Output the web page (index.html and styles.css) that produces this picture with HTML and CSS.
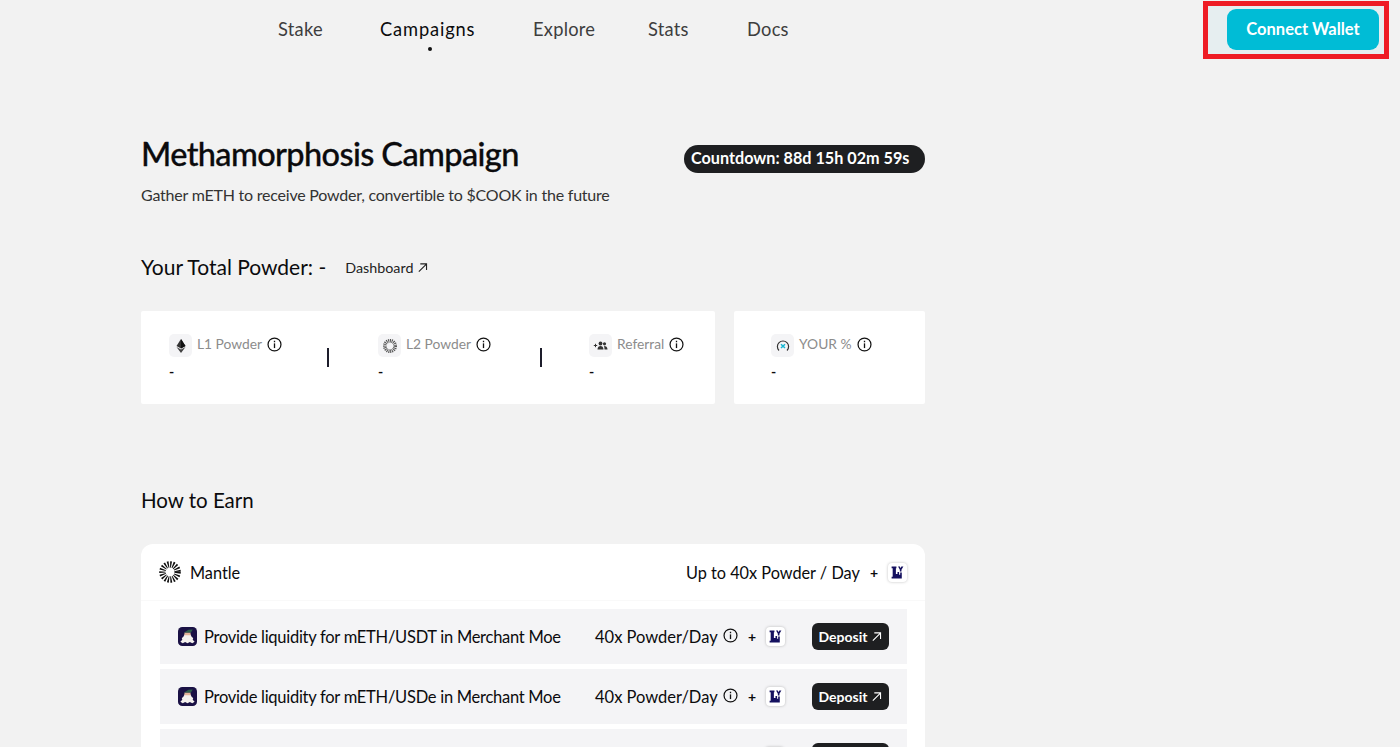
FILE: index.html
```html
<!DOCTYPE html>
<html lang="en">
<head>
<meta charset="utf-8">
<title>Methamorphosis Campaign</title>
<link rel="stylesheet" href="styles.css">
</head>
<body>
<svg class="sprites" width="0" height="0" aria-hidden="true">
  <symbol id="info" viewBox="0 0 16 16"><circle cx="8" cy="8" r="6.9" fill="none" stroke="currentColor" stroke-width="1.3"/><rect x="7.3" y="6.8" width="1.4" height="5" fill="currentColor"/><rect x="7.3" y="4" width="1.4" height="1.6" fill="currentColor"/></symbol>
  <symbol id="arrow" viewBox="0 0 12 12"><path d="M2 10.5 10 2.5M3.6 2H10.4V8.8" fill="none" stroke="currentColor" stroke-width="1.2"/></symbol>
  <symbol id="ly" viewBox="0 0 14 14"><path d="M1.5 1.5H6V3H5.5V8.5H7V6.5H8.5V9H9.5V7H11V12.5H1.5V11H2.5V3H1.5Z" fill="#14105f"/><path d="M7.5 1.5H9.2L9.9 3 10.6 1.5H12.5L10.7 4.4V6H9.2V4.4Z" fill="#14105f"/></symbol>
  <symbol id="moe" viewBox="0 0 20 20"><rect width="20" height="20" rx="4.5" fill="#1a1145"/><path d="M7 7.5 5.5 10.5 4 11.5 4.5 13.5 2.5 15.5 5 17 7.5 15.8 10 17 12.5 15.8 15 17 17.5 15.5 15.5 13.5 16 11.5 14.5 10.5 13 7.5Z" fill="#f4f1ee"/><path d="M6 6 11 3 15.5 2.5 13.5 6Z" fill="#2f5f4d"/><path d="M6.8 6H13.2V8.8H6.8Z" fill="#e3b49a"/></symbol>
</svg>

<header class="topbar">
  <nav class="nav">
    <a class="nav-link">Stake</a>
    <a class="nav-link nav-active">Campaigns</a>
    <a class="nav-link">Explore</a>
    <a class="nav-link">Stats</a>
    <a class="nav-link">Docs</a>
  </nav>
  <div class="wallet-frame"><button class="wallet-btn">Connect Wallet</button></div>
</header>

<main class="content">
  <section class="title-row">
    <div>
      <h1 class="title">Methamorphosis Campaign</h1>
      <p class="subtitle">Gather mETH to receive Powder, convertible to $COOK in the future</p>
    </div>
    <div class="countdown">Countdown: 88d 15h 02m 59s</div>
  </section>

  <section class="total-row">
    <h2 class="total">Your Total Powder: -</h2>
    <a class="dash">Dashboard <svg class="dash-arrow"><use href="#arrow"/></svg></a>
  </section>

  <section class="stats">
    <div class="stat-card stat-main">
      <div class="stat stat-a">
        <div class="stat-label">
          <span class="tile"><svg class="tile-icon" viewBox="0 0 16 16"><path d="M8 1 12.5 8 8 10.6 3.5 8Z" fill="#333"/><path d="M8 1V10.6L12.5 8Z" fill="#111"/><path d="M3.5 9 8 11.6 12.5 9 8 15Z" fill="#444"/></svg></span>
          <span class="label-text">L1 Powder</span><svg class="info"><use href="#info"/></svg>
        </div>
        <div class="stat-value">-</div>
      </div>
      <span class="divider"></span>
      <div class="stat stat-b">
        <div class="stat-label">
          <span class="tile"><svg class="tile-icon" viewBox="0 0 16 16"><circle cx="8" cy="8" r="5.2" fill="none" stroke="#555" stroke-width="3.6" stroke-dasharray="1 .7"/></svg></span>
          <span class="label-text">L2 Powder</span><svg class="info"><use href="#info"/></svg>
        </div>
        <div class="stat-value">-</div>
      </div>
      <span class="divider"></span>
      <div class="stat stat-c">
        <div class="stat-label">
          <span class="tile"><svg class="tile-icon" viewBox="0 0 16 16"><circle cx="7.5" cy="5.5" r="1.9" fill="#333"/><circle cx="11.5" cy="5.8" r="1.6" fill="#333"/><path d="M4.5 11.5C4.5 9 6 8 7.5 8S10.5 9 10.5 11.5ZM11 8C13 8 14.5 9 14.5 11.5H11.5C11.5 10 11.3 9 11 8Z" fill="#333"/><path d="M.8 7.5H4.2M2.5 5.8V9.2" stroke="#333" stroke-width="1"/></svg></span>
          <span class="label-text">Referral</span><svg class="info"><use href="#info"/></svg>
        </div>
        <div class="stat-value">-</div>
      </div>
    </div>
    <div class="stat-card stat-side">
      <div class="stat">
        <div class="stat-label">
          <span class="tile"><svg class="tile-icon" viewBox="0 0 16 16"><path d="M4 12.5A5.6 5.6 0 1 1 12 12.5" fill="none" stroke="#333" stroke-width="1.2"/><path d="M6 6.2 10 10M10 6.2 6 10" stroke="#19b6d2" stroke-width="1.5"/></svg></span>
          <span class="label-text">YOUR %</span><svg class="info"><use href="#info"/></svg>
        </div>
        <div class="stat-value">-</div>
      </div>
    </div>
  </section>

  <h2 class="earn-title">How to Earn</h2>

  <section class="earn-card">
    <div class="earn-head">
      <div class="chain">
        <svg class="chain-icon" viewBox="0 0 22 22"><circle cx="11" cy="11" r="7.6" fill="none" stroke="#111" stroke-width="6.4" stroke-dasharray="1.35 1.2"/></svg>
        <span>Mantle</span>
      </div>
      <div class="reward">
        <span>Up to 40x Powder / Day</span>
        <span class="plus">+</span>
        <span class="badge"><svg class="badge-icon"><use href="#ly"/></svg></span>
      </div>
    </div>
    <div class="rows">
      <div class="row">
        <div class="row-task"><svg class="moe"><use href="#moe"/></svg><span>Provide liquidity for mETH/USDT in Merchant Moe</span></div>
        <div class="row-reward"><span class="rate">40x Powder/Day</span><svg class="info"><use href="#info"/></svg><span class="plus">+</span><span class="badge"><svg class="badge-icon"><use href="#ly"/></svg></span></div>
        <a class="deposit">Deposit <svg class="deposit-arrow"><use href="#arrow"/></svg></a>
      </div>
      <div class="row">
        <div class="row-task"><svg class="moe"><use href="#moe"/></svg><span>Provide liquidity for mETH/USDe in Merchant Moe</span></div>
        <div class="row-reward"><span class="rate">40x Powder/Day</span><svg class="info"><use href="#info"/></svg><span class="plus">+</span><span class="badge"><svg class="badge-icon"><use href="#ly"/></svg></span></div>
        <a class="deposit">Deposit <svg class="deposit-arrow"><use href="#arrow"/></svg></a>
      </div>
      <div class="row">
        <div class="row-task"></div>
        <div class="row-reward row-reward-clipped"><span class="badge"><svg class="badge-icon"><use href="#ly"/></svg></span></div>
        <a class="deposit"></a>
      </div>
    </div>
  </section>
</main>
</body>
</html>
```
FILE: styles.css
```css
* { box-sizing: border-box; }
html, body { margin: 0; height: 747px; overflow: hidden; }
body { background: #f2f2f2; color: #0b0b0d; font-family: "Lato", "Liberation Sans", sans-serif; }
.sprites { position: absolute; }
h1, h2, p { margin: 0; font-weight: 400; }

.topbar { display: flex; justify-content: space-between; align-items: flex-start; height: 60px; padding: 1px 11px 0 278px; }
.nav { display: grid; grid-template-columns: 102px 153px 115px 99px auto; padding-top: 18px; }
.nav-link { position: relative; font-size: 18.3px; line-height: 20px; letter-spacing: .25px; color: #3e3e3e; }
.nav-active { color: #0b0b0d; letter-spacing: .85px; }
.nav-active::after { content: ""; position: absolute; left: 48px; top: 28px; width: 4px; height: 4px; border-radius: 50%; background: #111; }
.wallet-frame { display: flex; justify-content: flex-end; width: 186px; height: 58px; padding: 3px 5px 0 0; border: 5px solid #ee1c25; background: #e6eef0; }
.wallet-btn { width: 152px; height: 41px; padding: 0 0 2px; border: 0; border-radius: 9px; background: #00bcd6; color: #fff; font: 700 16.5px "Lato", sans-serif; }

.content { width: 784px; margin-left: 141px; }
.title-row { display: flex; justify-content: space-between; align-items: flex-start; padding-top: 74px; }
.title { font-size: 32.5px; line-height: 40px; letter-spacing: -.62px; font-weight: 500; -webkit-text-stroke: .3px #0b0b0d; }
.subtitle { margin-top: 11px; font-size: 16px; line-height: 20px; letter-spacing: -.22px; color: #333; }
.countdown { margin-top: 11px; height: 28px; padding: 0 0 0 7px; border-radius: 14px; background: #1e1f21; color: #fff; font-size: 16.2px; font-weight: 700; line-height: 26px; width: 241px; white-space: nowrap; }

.total-row { display: flex; align-items: center; gap: 19px; margin-top: 49px; height: 26px; }
.total { font-size: 21px; line-height: 26px; }
.dash { display: flex; align-items: center; gap: 4px; font-size: 14.3px; color: #222; }
.dash-arrow { width: 11px; height: 11px; color: #222; }

.stats { display: flex; gap: 19px; margin-top: 31px; }
.stat-card { height: 93px; padding: 23px 0 0 28px; background: #fff; border-radius: 2px; }
.stat-main { display: flex; width: 574px; }
.stat-side { width: 191px; padding-left: 37px; }
.stat-a { width: 159px; }
.stat-b { width: 163px; }
.stat-c { margin-left: -2px; }
.stat-label { display: flex; align-items: center; height: 23px; font-size: 13.8px; color: #8c8c8c; }
.label-text { margin-top: -4px; }
.tile { display: flex; align-items: center; justify-content: center; width: 23px; height: 23px; margin-right: 5px; border-radius: 5px; background: #f4f4f6; }
.tile-icon { width: 16px; height: 16px; }
.info { flex: none; width: 15px; height: 15px; margin: -3px 0 0 5px; color: #111; }
.stat-value { margin-top: 6px; font-size: 14px; line-height: 17px; font-weight: 700; }
.divider { flex: none; width: 2px; height: 19px; margin: 14px 49px 0 -1px; background: #1d1d2b; }

.earn-title { margin-top: 83px; font-size: 20.5px; line-height: 26px; }
.earn-card { margin-top: 31px; height: 203px; overflow: hidden; background: #fff; border-radius: 12px 12px 0 0; }
.earn-head { display: flex; justify-content: space-between; align-items: center; height: 57px; padding: 0 18px 0 19px; margin-bottom: 8px; border-bottom: 1px solid #f9f9f9; font-size: 16.3px; }
.chain { display: flex; align-items: center; gap: 9px; margin-left: -1px; }
.chain-icon { width: 22px; height: 22px; }
.reward { display: flex; align-items: center; padding-top: 1px; }
.plus { margin: 0 10px; font-weight: 700; font-size: 14px; }
.badge { flex: none; display: flex; align-items: center; justify-content: center; width: 19px; height: 19px; border-radius: 4px; background: #fff; box-shadow: 0 0 3px rgba(0, 0, 0, .25); }
.badge-icon { width: 15px; height: 15px; }
.rows { display: flex; flex-direction: column; gap: 5px; padding: 0 18px 0 19px; }
.row { display: flex; align-items: center; flex: none; height: 55px; padding: 0 18px; background: #f4f4f6; font-size: 16.5px; letter-spacing: -.27px; }
.row-task { display: flex; align-items: center; gap: 7px; width: 417px; white-space: nowrap; }
.moe { flex: none; width: 19px; height: 19px; }
.row-reward { display: flex; align-items: center; width: 217px; white-space: nowrap; letter-spacing: 0; }
.row-reward-clipped { padding-left: 170px; }
.rate { width: 123px; }
.deposit { display: flex; align-items: center; justify-content: center; gap: 4px; width: 77px; height: 27px; border-radius: 6px; background: #1e1f21; color: #fff; font-size: 14px; font-weight: 700; letter-spacing: 0; }
.deposit-arrow { width: 11px; height: 11px; }
```
